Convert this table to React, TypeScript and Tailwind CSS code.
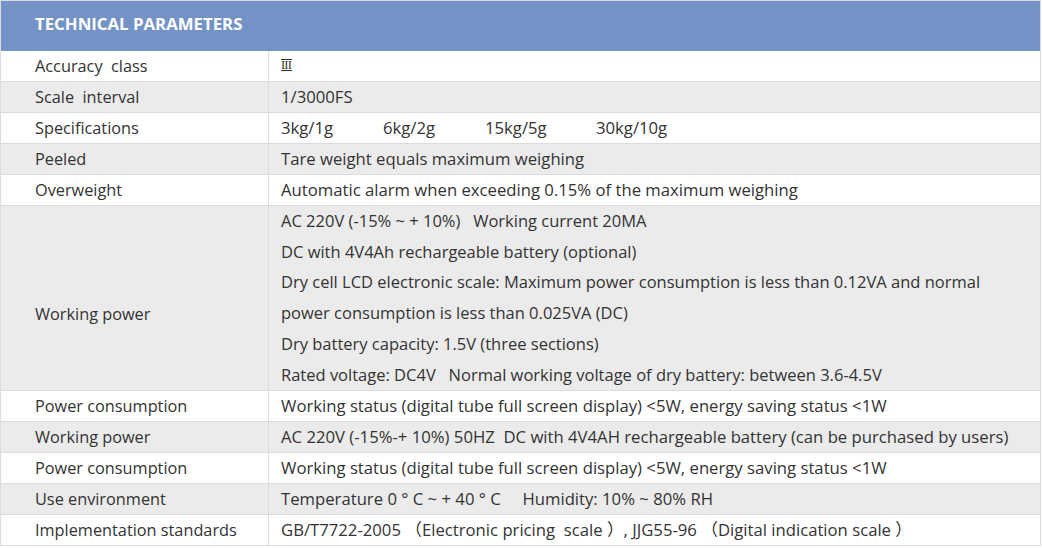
import React from "react";

const font = { fontFamily: '"Open Sans", "Noto Sans CJK SC", sans-serif' };

type Row = { label: string; lines?: string[]; node?: React.ReactNode; gray: boolean };

function Cell({ children }: { children: React.ReactNode }) {
  return <div className="whitespace-pre">{children}</div>;
}

function RomanThree() {
  return (
    <div className="h-[30px] flex items-center">
      <span className="mb-[2px] h-[12px] border-y-[1.5px] border-[#333] flex items-center font-['Liberation_Serif'] text-[12.5px] leading-[9px] tracking-[-0.8px] pr-[0.5px] text-[#333]">
        III
      </span>
    </div>
  );
}

export default function App() {
  const rows: Row[] = [
    { label: "Accuracy  class", node: <RomanThree />, gray: false },
    { label: "Scale  interval", lines: ["1/3000FS"], gray: true },
    {
      label: "Specifications",
      node: (
        <div className="flex">
          <span className="w-[102px]">3kg/1g</span>
          <span className="w-[102px]">6kg/2g</span>
          <span className="w-[111px]">15kg/5g</span>
          <span>30kg/10g</span>
        </div>
      ),
      gray: false,
    },
    { label: "Peeled", lines: ["Tare weight equals maximum weighing"], gray: true },
    { label: "Overweight", lines: ["Automatic alarm when exceeding 0.15% of the maximum weighing"], gray: false },
  ];
  const rows2: Row[] = [
    { label: "Power consumption", lines: ["Working status (digital tube full screen display) <5W, energy saving status <1W"], gray: false },
    { label: "Working power", lines: ["AC 220V (-15%-+ 10%) 50HZ  DC with 4V4AH rechargeable battery (can be purchased by users)"], gray: true },
    { label: "Power consumption", lines: ["Working status (digital tube full screen display) <5W, energy saving status <1W"], gray: false },
    { label: "Use environment", lines: ["Temperature 0 ° C ~ + 40 ° C     Humidity: 10% ~ 80% RH"], gray: true },
    { label: "Implementation standards", lines: ["GB/T7722-2005 （Electronic pricing  scale ）, JJG55-96 （Digital indication scale ）"], gray: false },
  ];

  const renderRow = (r: Row, i: number) => (
    <div
      key={i}
      className={`grid grid-cols-[268px_1fr] h-[31px] border-b border-[#dcdcdc] ${r.gray ? "bg-[#ebebeb]" : "bg-white"}`}
    >
      <div className="border-r border-[#dcdcdc] pl-[34px] leading-[30px] text-[16.3px] whitespace-pre">{r.label}</div>
      <div className="pl-[12px] leading-[30px] text-[16.7px]">
        {r.node ?? r.lines!.map((l, j) => <Cell key={j}>{l}</Cell>)}
      </div>
    </div>
  );

  const bigLines = [
    "AC 220V (-15% ~ + 10%)   Working current 20MA",
    "DC with 4V4Ah rechargeable battery (optional)",
    "Dry cell LCD electronic scale: Maximum power consumption is less than 0.12VA and normal",
    "power consumption is less than 0.025VA (DC)",
    "Dry battery capacity: 1.5V (three sections)",
    "Rated voltage: DC4V   Normal working voltage of dry battery: between 3.6-4.5V",
  ];

  return (
    <div className="w-[1042px] h-[548px] bg-white text-[#333]" style={font}>
      <div className="w-[1041px] border border-[#dcdcdc] border-b-0">
        <div className="h-[50px] bg-[#7393c7] pl-[34px] pb-[4px] flex items-center text-white font-bold text-[16.8px]">
          TECHNICAL PARAMETERS
        </div>
        {rows.map(renderRow)}
        <div className="grid grid-cols-[268px_1fr] h-[185px] border-b border-[#dcdcdc] bg-[#ebebeb]">
          <div className="border-r border-[#dcdcdc] pl-[34px] pt-[93px] leading-[30px] text-[16.3px]">Working power</div>
          <div className="pl-[12px] leading-[30.7px] text-[16.5px]">
            {bigLines.map((l, j) => (
              <Cell key={j}>{l}</Cell>
            ))}
          </div>
        </div>
        {rows2.map(renderRow)}
      </div>
    </div>
  );
}
